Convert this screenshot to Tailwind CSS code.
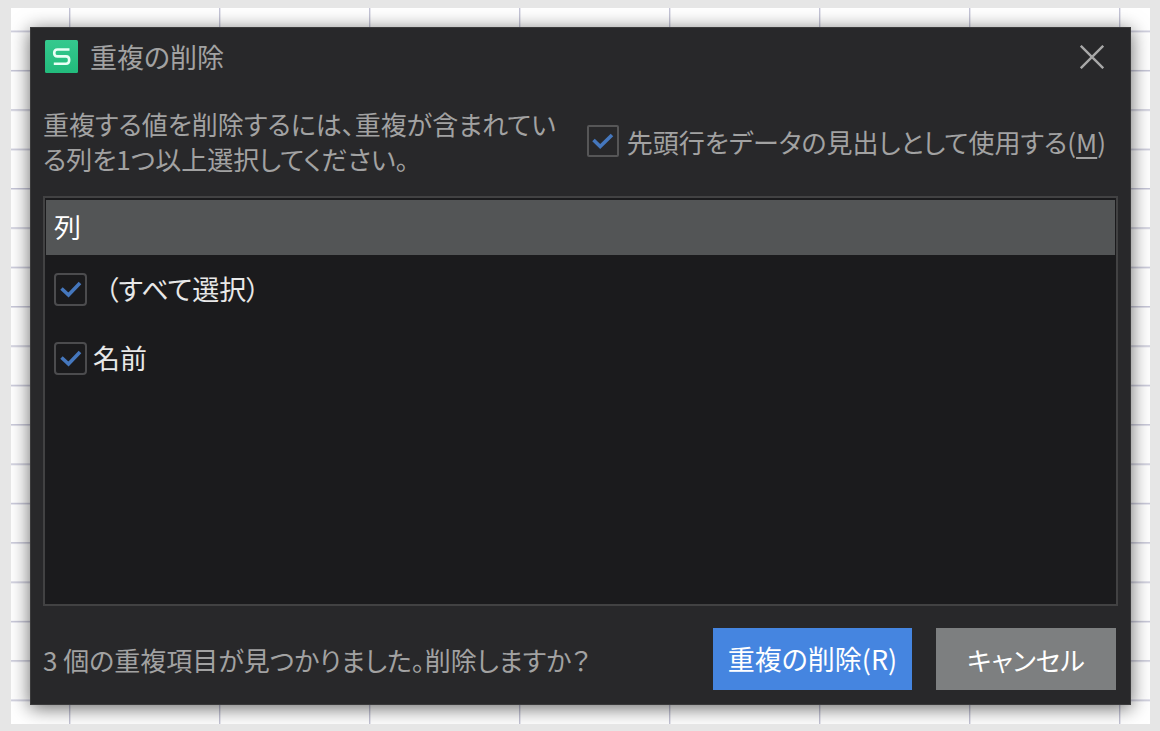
<!DOCTYPE html>
<html lang="ja">
<head>
  <meta charset="UTF-8">
  <meta name="viewport" content="width=device-width, initial-scale=1">
  <title>重複の削除</title>
  <script src="https://cdn.jsdelivr.net/npm/@tailwindcss/browser@4"></script>
</head>
<body class="bg-[#e6e6e6] font-['Noto_Sans_CJK_JP',sans-serif] [font-feature-settings:'palt'] text-[26px] text-[#a2a2a2]">
  <div class="flex min-h-screen pt-2 pr-2.5 pb-[7px] pl-[11px]">
    <div class="relative flex flex-1 overflow-hidden bg-white p-[19px]">
      <!-- sheet grid -->
      <svg class="absolute inset-0 h-full w-full" aria-hidden="true">
        <defs>
          <pattern id="cells" x="58" y="22.6" width="150" height="39.35" patternUnits="userSpaceOnUse">
            <path d="M0.7 0V39.35M0 0.7H150" stroke="#c4c4d6" stroke-width="1.4" fill="none"/>
          </pattern>
        </defs>
        <rect width="100%" height="100%" fill="url(#cells)"/>
      </svg>

      <form class="relative flex flex-1 flex-col border border-[#3a3a3b] bg-[#28282a] px-3 pt-3 pb-3.5 shadow-[0_3px_18px_rgba(0,0,0,0.6)]">
        <div class="flex items-center pr-3.5 pl-0.5">
          <svg class="size-[33px]" viewBox="0 0 33 33" aria-hidden="true">
            <defs>
              <linearGradient id="logo" x1="0" y1="0" x2="0" y2="1">
                <stop offset="0" stop-color="#35c98e"/>
                <stop offset="1" stop-color="#22bb7c"/>
              </linearGradient>
            </defs>
            <rect width="33" height="33" rx="1.5" fill="url(#logo)"/>
            <path d="M24.5 9.5H12.5Q9.2 9.5 9.2 12.9Q9.2 16.4 12.5 16.4H21Q24.2 16.4 24.2 20Q24.2 23.8 21 23.8H8.8" fill="none" stroke="#e9fff5" stroke-width="2.6"/>
          </svg>
          <h1 class="ml-3 text-[27px] leading-8">重複の削除</h1>
          <button type="button" aria-label="閉じる" class="ml-auto">
            <svg class="size-6" viewBox="0 0 24 24" fill="none" stroke="#a8a8a8" stroke-width="2.4"><path d="M0.8 0.8L23.2 23.2M23.2 0.8L0.8 23.2"/></svg>
          </button>
        </div>

        <div class="mt-[33px] mb-5 flex items-center justify-between pr-3">
          <p class="leading-[35px] whitespace-nowrap">重複する値を削除するには、重複が含まれてい<br>る列を1つ以上選択してください。</p>
          <label class="flex items-center gap-2 whitespace-nowrap">
            <span class="grid size-8 shrink-0">
              <input type="checkbox" checked class="peer col-start-1 row-start-1 appearance-none rounded-xs border-2 border-[#565657]">
              <svg class="invisible col-start-1 row-start-1 size-8 peer-checked:visible" viewBox="0 0 32 32" fill="none" stroke="#4577bd" stroke-width="3.6"><path d="M6.5 15L13.2 21.5L25 10"/></svg>
            </span>
            <span>先頭行をデータの見出しとして使用する(<u class="underline-offset-4">M</u>)</span>
          </label>
        </div>

        <div class="flex-1 border-2 border-[#424243] bg-[#1b1b1d] px-px py-0.5 text-[27px] text-[#e8e8e8]">
          <table class="w-full">
            <thead>
              <tr class="h-[55px] bg-[#535556] text-white">
                <th class="px-2 text-left font-normal">列</th>
              </tr>
            </thead>
            <tbody>
              <tr class="h-[69px]">
                <td class="px-2">
                  <label class="flex items-center gap-1.5">
                    <span class="grid size-[33px] shrink-0">
                      <input type="checkbox" checked class="peer col-start-1 row-start-1 appearance-none rounded-sm border-2 border-[#4c4c4e]">
                      <svg class="invisible col-start-1 row-start-1 size-[33px] peer-checked:visible" viewBox="0 0 33 33" fill="none" stroke="#4577bd" stroke-width="3.6"><path d="M7.5 15.5L14.5 22L26 10"/></svg>
                    </span>
                    <span class="pl-3">（すべて選択）</span>
                  </label>
                </td>
              </tr>
              <tr class="h-[69px]">
                <td class="px-2">
                  <label class="flex items-center gap-1.5">
                    <span class="grid size-[33px] shrink-0">
                      <input type="checkbox" checked class="peer col-start-1 row-start-1 appearance-none rounded-sm border-2 border-[#4c4c4e]">
                      <svg class="invisible col-start-1 row-start-1 size-[33px] peer-checked:visible" viewBox="0 0 33 33" fill="none" stroke="#4577bd" stroke-width="3.6"><path d="M7.5 15.5L14.5 22L26 10"/></svg>
                    </span>
                    <span>名前</span>
                  </label>
                </td>
              </tr>
            </tbody>
          </table>
        </div>

        <div class="mt-[22px] flex items-center gap-6 pr-0.5">
          <p class="mr-auto whitespace-nowrap">3 個の重複項目が見つかりました。削除しますか？</p>
          <button type="submit" class="h-[62px] w-[199px] whitespace-nowrap bg-[#4585e0] text-[27px] text-white">重複の削除(R)</button>
          <button type="button" class="h-[62px] w-[180px] whitespace-nowrap bg-[#7d7f80] text-white">キャンセル</button>
        </div>
      </form>
    </div>
  </div>
</body>
</html>
